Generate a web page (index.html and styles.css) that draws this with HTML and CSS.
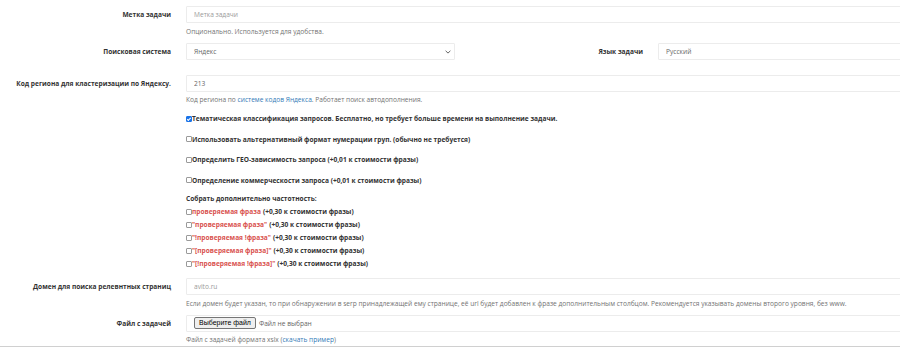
FILE: index.html
```html
<!DOCTYPE html>
<html lang="ru">
<head>
    <meta charset="UTF-8">
    <meta name="viewport" content="width=device-width, initial-scale=1.0">
    <title>Новая задача</title>
    <link rel="stylesheet" href="styles.css">
</head>
<body>
    <form class="task-form">
        <!-- Метка -->
        <div class="form-row">
            <label class="form-label" for="task-label">Метка задачи</label>
            <div class="form-field">
                <input id="task-label" class="form-input" type="text" placeholder="Метка задачи">
                <p class="help">Опционально. Используется для удобства.</p>
            </div>
        </div>

        <!-- Поисковая система / язык -->
        <div class="form-row form-row-split">
            <label class="form-label" for="engine">Поисковая система</label>
            <div class="select-wrap">
                <select id="engine" class="form-input form-select">
                    <option>Яндекс</option>
                    <option>Google</option>
                </select>
                <svg class="select-arrow" width="6" height="4" viewBox="0 0 6 4"><path d="M0.6 0.8 L3 3.1 L5.4 0.8" fill="none" stroke="#555" stroke-width="0.9"/></svg>
            </div>
            <label class="form-label" for="lang">Язык задачи</label>
            <input id="lang" class="form-input" type="text" value="Русский">
        </div>

        <!-- Регион -->
        <div class="form-row">
            <label class="form-label" for="region">Код региона для кластеризации по Яндексу.</label>
            <div class="form-field">
                <input id="region" class="form-input" type="text" value="213">
                <p class="help">Код региона по <a href="#">системе кодов Яндекса</a>. Работает поиск автодополнения.</p>
            </div>
        </div>

        <!-- Опции -->
        <div class="form-row">
            <div></div>
            <div class="options">
                <label class="check"><input type="checkbox" checked>Тематическая классификация запросов. Бесплатно, но требует больше времени на выполнение задачи.</label>
                <label class="check"><input type="checkbox">Использовать альтернативный формат нумерации груп. (обычно не требуется)</label>
                <label class="check"><input type="checkbox">Определить ГЕО-зависимость запроса (+0,01 к стоимости фразы)</label>
                <label class="check"><input type="checkbox">Определение коммерческости запроса (+0,01 к стоимости фразы)</label>

                <div class="freq">
                    <p class="freq-title">Собрать дополнительно частотность:</p>
                    <label class="check check-sm"><input type="checkbox"><span class="phrase">проверяемая фраза</span> (+0,30 к стоимости фразы)</label>
                    <label class="check check-sm"><input type="checkbox"><span class="phrase">"проверяемая фраза"</span> (+0,30 к стоимости фразы)</label>
                    <label class="check check-sm"><input type="checkbox"><span class="phrase">"!проверяемая !фраза"</span> (+0,30 к стоимости фразы)</label>
                    <label class="check check-sm"><input type="checkbox"><span class="phrase">"[проверяемая фраза]"</span> (+0,30 к стоимости фразы)</label>
                    <label class="check check-sm"><input type="checkbox"><span class="phrase">"[!проверяемая !фраза]"</span> (+0,30 к стоимости фразы)</label>
                </div>
            </div>
        </div>

        <!-- Домен -->
        <div class="form-row">
            <label class="form-label" for="domain">Домен для поиска релевнтных страниц</label>
            <div class="form-field">
                <input id="domain" class="form-input" type="text" placeholder="avito.ru">
                <p class="help">Если домен будет указан, то при обнаружении в serp принадлежащей ему странице, её url будет добавлен к фразе дополнительным столбцом. Рекомендуется указывать домены второго уровня, без www.</p>
            </div>
        </div>

        <!-- Файл -->
        <div class="form-row form-row-last">
            <span class="form-label">Файл с задачей</span>
            <div class="form-field">
                <div class="form-input file-box">
                    <label class="file-btn">Выберите файл<input type="file" class="file-hidden"></label>
                    <span class="file-name">Файл не выбран</span>
                </div>
                <p class="help">Файл с задачей формата xslx (<a href="#">скачать пример</a>)</p>
            </div>
        </div>
    </form>
</body>
</html>
```

FILE: styles.css
```css
/* Base */
* {
    margin: 0;
    padding: 0;
    box-sizing: border-box;
}

html, body {
    overflow: hidden;
}

body {
    font-family: 'Open Sans', 'Noto Sans', sans-serif;
    font-size: 6.6px;
    line-height: 9px;
    color: #333;
    background: #fff;
}

a {
    color: #337ab7;
    text-decoration: none;
}

/* Form layout */
.task-form {
    width: 1011px;
    padding-top: 6px;
    padding-bottom: 2px;
    border-bottom: 1px solid #d0d0d0;
}

.form-row {
    display: grid;
    grid-template-columns: 171px 1fr;
    column-gap: 15px;
    margin-bottom: 7px;
}

.form-row-split {
    grid-template-columns: 171px 269px 173px 1fr;
    margin-bottom: 15px;
}

.form-row-last {
    margin-bottom: 0;
}

.form-label {
    text-align: right;
    font-weight: bold;
    line-height: 17px;
    color: #333;
    white-space: nowrap;
}

.form-input {
    display: block;
    width: 100%;
    height: 17px;
    padding: 0 7px;
    border: 1px solid #ececec;
    border-radius: 1px;
    font-family: inherit;
    font-size: 6.6px;
    color: #666;
    background: #fff;
    outline: none;
}

.form-input::placeholder {
    color: #9a9a9a;
}

.select-wrap {
    position: relative;
}

.form-select {
    appearance: none;
    -webkit-appearance: none;
}

.select-arrow {
    position: absolute;
    right: 4px;
    top: 7px;
}

.help {
    margin-top: 3.5px;
    color: #737373;
}

/* Options */
.options {
    padding-top: 3px;
}

.check {
    display: flex;
    align-items: center;
    font-weight: bold;
    height: 9px;
    margin-bottom: 11.5px;
    white-space: nowrap;
    color: #333;
}

.check input {
    appearance: none;
    -webkit-appearance: none;
    position: relative;
    width: 6px;
    height: 6px;
    margin: 0;
    flex-shrink: 0;
    border: 1px solid #9a9a9a;
    border-radius: 1px;
    background: #fff;
}

.check input:checked {
    border-color: #1a73e8;
    background: #1a73e8;
}

.check input:checked::after {
    content: '';
    position: absolute;
    left: 1.2px;
    top: 0;
    width: 1.4px;
    height: 2.8px;
    border: solid #fff;
    border-width: 0 0.9px 0.9px 0;
    transform: rotate(45deg);
}

.freq {
    margin-top: -2px;
}

.freq-title {
    font-weight: bold;
    margin-bottom: 4px;
}

.check-sm {
    margin-bottom: 4px;
}

.check-sm:last-child {
    margin-bottom: 3px;
}

.phrase {
    color: #d9534f;
    margin-right: 2px;
}

/* File input */
.file-box {
    display: flex;
    align-items: center;
    gap: 3px;
}

.file-btn {
    display: inline-block;
    height: 12px;
    line-height: 10px;
    padding: 0 4px;
    border: 1px solid #767676;
    border-radius: 2px;
    background: #efefef;
    font-family: 'Liberation Sans', Arial, sans-serif;
    font-size: 7px;
    color: #000;
}

.file-hidden {
    display: none;
}

.file-name {
    color: #666;
}
```
